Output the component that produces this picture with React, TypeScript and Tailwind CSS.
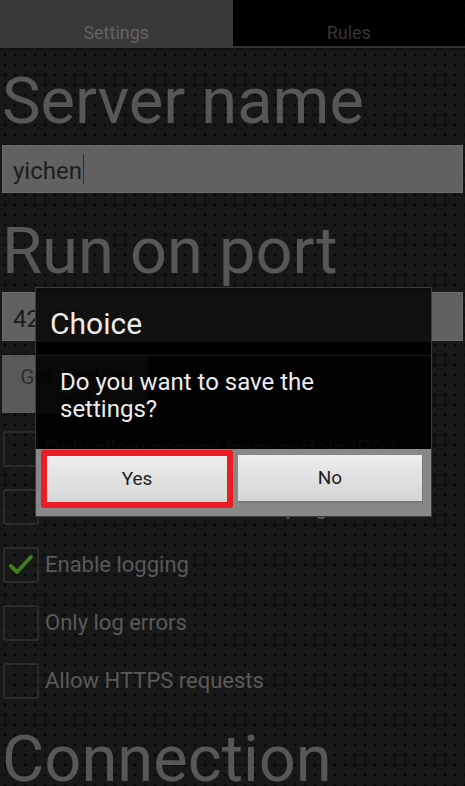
type Option = {
  id: number;
  label: string;
  checked?: boolean;
};

const options: Option[] = [
  { id: 1, label: 'Only allow access from certain IP(s)' },
  { id: 2, label: 'Prevent device from sleeping' },
  { id: 3, label: 'Enable logging', checked: true },
  { id: 4, label: 'Only log errors' },
  { id: 5, label: 'Allow HTTPS requests' },
];

const CheckRow = ({ option }: { option: Option }) => (
  <div className="flex items-center h-[36px] gap-[6px]">
    <div className="w-[36px] h-[36px] ml-[1px] border-2 border-[#2b2b2b] rounded-[3px] flex items-center justify-center">
      {option.checked && (
        <svg width="26" height="24" viewBox="0 0 26 24">
          <path d="M3 13 L9 19 L23 4" fill="none" stroke="#3f7d1a" strokeWidth="4" strokeLinecap="round" strokeLinejoin="round" />
        </svg>
      )}
    </div>
    <span className="text-[22px] text-[#5a5a5a] leading-none">{option.label}</span>
  </div>
);

const App = () => {
  return (
    <div className="relative w-[465px] h-[786px] overflow-hidden bg-[#181818] bg-[radial-gradient(circle,#080808_1px,transparent_1.8px)] bg-[length:10px_10px] font-['Roboto',sans-serif]">
      {/* Tabs */}
      <div className="flex h-[50px] border-b-2 border-[#101010]">
        <div className="w-1/2 bg-[#393939] flex items-end justify-center">
          <span className="text-[18px] text-[#626262] leading-none mb-[6px]">Settings</span>
        </div>
        <div className="w-1/2 bg-black border-b-2 border-[#333333] flex items-end justify-center">
          <span className="text-[18px] text-[#353535] leading-none mb-[4px]">Rules</span>
        </div>
      </div>

      <div className="px-[2px]">
        <h1 className="mt-[19px] text-[65px] leading-[64px] text-[#575757] font-normal">Server name</h1>
        <div className="mt-[12px] h-[48px] bg-[#616161] border border-[#6c6c6c] flex items-center pl-[10px] pt-[4px]">
          <span className="text-[24px] text-[#1c1c1c] leading-none">yichen</span>
          <span className="w-[1px] h-[30px] bg-[#2e2e2e] ml-[1px] -mt-[4px]" />
        </div>

        <h1 className="mt-[26px] text-[65px] leading-[64px] text-[#575757] font-normal">Run on port</h1>
        <div className="mt-[9px] h-[49px] bg-[#616161] border border-[#6c6c6c] flex items-center pl-[10px] pt-[4px]">
          <span className="text-[24px] text-[#1c1c1c] leading-none">42335</span>
        </div>

        <button className="mt-[14px] w-[146px] h-[58px] bg-[#5a5a5a] text-[#2e2e2e] text-[21px] leading-[21px] pt-[8px] block">
          Get random
          <br />
          port
        </button>

        <div className="mt-[18px] flex flex-col gap-[22px]">
          {options.map((o) => (
            <CheckRow key={o.id} option={o} />
          ))}
        </div>

        <h1 className="mt-[28px] text-[65px] leading-[64px] text-[#575757] font-normal">Connection</h1>
      </div>

      {/* Dialog */}
      <div className="absolute left-[35px] top-[287px] w-[397px] border border-[#3c3c3c] flex flex-col">
        <div className="h-[54px] bg-[#0d0d0d]/95 pl-[14px] pt-[21px]">
          <span className="text-[30px] leading-none text-[#ececec]">Choice</span>
        </div>
        <div className="h-[13px] bg-black/95" />
        <div className="h-[1px] bg-[#1e1e1e]" />
        <div className="h-[93px] bg-black/90 pl-[24px] pt-[13px]">
          <p className="text-[24px] leading-[27px] text-[#ececec]">
            Do you want to save the
            <br />
            settings?
          </p>
        </div>
        <div className="h-[67px] bg-[#888888] flex items-start gap-[5px] pl-[5px] pr-[8px] pt-[1px]">
          <div className="w-[192px] h-[58px] border-[6px] border-[#ec1c24] rounded-[3px]">
            <button className="w-full h-full bg-gradient-to-b from-[#ededed] to-[#d7d7d7] text-[19px] text-[#222222]">
              Yes
            </button>
          </div>
          <button className="mt-[5px] w-[185px] h-[48px] bg-gradient-to-b from-[#ededed] to-[#d5d5d5] border-b-2 border-r border-[#777777] text-[19px] text-[#222222]">
            No
          </button>
        </div>
      </div>
    </div>
  );
};

export default App;
